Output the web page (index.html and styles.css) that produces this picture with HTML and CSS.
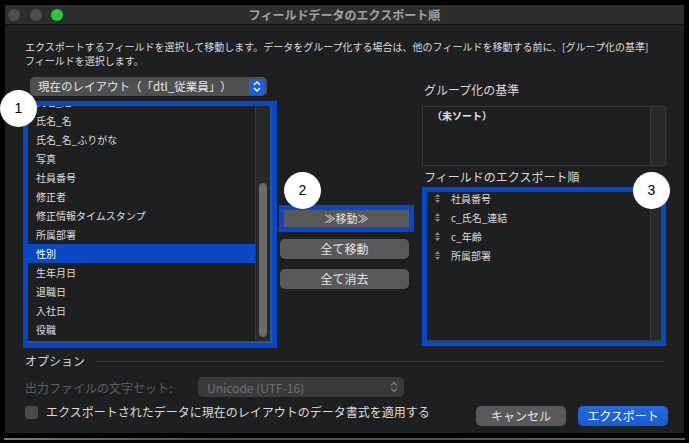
FILE: index.html
```html
<!DOCTYPE html>
<html lang="ja">
<head>
    <meta charset="UTF-8">
    <title>フィールドデータのエクスポート順</title>
    <link rel="stylesheet" href="styles.css">
</head>
<body>
    <div class="window">
        <div class="titlebar">
            <div class="lights">
                <i class="light"></i>
                <i class="light"></i>
                <i class="light green"></i>
            </div>
            <div class="title">フィールドデータのエクスポート順</div>
            <div></div>
        </div>

        <p class="intro">エクスポートするフィールドを選択して移動します。データをグループ化する場合は、他のフィールドを移動する前に、[グループ化の基準]<br>フィールドを選択します。</p>

        <div class="main">
            <!-- 左: フィールド一覧 -->
            <div class="leftcol">
                <div class="popup">
                    <span>現在のレイアウト（「dtl_従業員」）</span>
                    <span class="stepper">
                        <svg width="8" height="11" viewBox="0 0 8 11"><path d="M1 4 L4 1 L7 4 M1 7 L4 10 L7 7" fill="none" stroke="#fff" stroke-width="1.4"/></svg>
                    </span>
                </div>
                <div class="frame leftframe">
                    <div class="list">
                        <ul class="rows">
                            <li class="first">氏名_姓</li>
                            <li>氏名_名</li>
                            <li>氏名_名_ふりがな</li>
                            <li>写真</li>
                            <li>社員番号</li>
                            <li>修正者</li>
                            <li>修正情報タイムスタンプ</li>
                            <li>所属部署</li>
                            <li class="sel">性別</li>
                            <li>生年月日</li>
                            <li>退職日</li>
                            <li>入社日</li>
                            <li>役職</li>
                        </ul>
                        <div class="track"><span class="thumb"></span></div>
                    </div>
                </div>
            </div>

            <!-- 中央: ボタン -->
            <div class="midcol">
                <div class="frame moveframe">
                    <div class="btn movebtn">≫移動≫</div>
                </div>
                <div class="btn wide">全て移動</div>
                <div class="btn wide gap">全て消去</div>
            </div>

            <!-- 右: グループ化 / エクスポート順 -->
            <div class="rightcol">
                <div class="label">グループ化の基準</div>
                <div class="groupbox">
                    <div class="groupitems">
                        <div class="unsorted">（未ソート）</div>
                    </div>
                    <div class="track side"></div>
                </div>
                <div class="label label2">フィールドのエクスポート順</div>
                <div class="frame rightframe">
                    <div class="orderlist">
                        <ul class="orders">
                            <li><svg class="handle" width="7" height="9" viewBox="0 0 7 9"><path d="M3.5 0 L6 3 H1 Z M1 6 H6 L3.5 9 Z" fill="#8c8c8c"/><path d="M1.5 4.5 H5.5" stroke="#6c6c6c" stroke-width="1"/></svg>社員番号</li>
                            <li><svg class="handle" width="7" height="9" viewBox="0 0 7 9"><path d="M3.5 0 L6 3 H1 Z M1 6 H6 L3.5 9 Z" fill="#8c8c8c"/><path d="M1.5 4.5 H5.5" stroke="#6c6c6c" stroke-width="1"/></svg>c_氏名_連結</li>
                            <li><svg class="handle" width="7" height="9" viewBox="0 0 7 9"><path d="M3.5 0 L6 3 H1 Z M1 6 H6 L3.5 9 Z" fill="#8c8c8c"/><path d="M1.5 4.5 H5.5" stroke="#6c6c6c" stroke-width="1"/></svg>c_年齢</li>
                            <li><svg class="handle" width="7" height="9" viewBox="0 0 7 9"><path d="M3.5 0 L6 3 H1 Z M1 6 H6 L3.5 9 Z" fill="#8c8c8c"/><path d="M1.5 4.5 H5.5" stroke="#6c6c6c" stroke-width="1"/></svg>所属部署</li>
                        </ul>
                        <div class="track side"></div>
                    </div>
                </div>
            </div>
        </div>

        <!-- オプション -->
        <div class="options">
            <div class="optrow">
                <span>オプション</span>
                <span class="rule"></span>
            </div>
            <div class="charset">
                <span class="charlabel">出力ファイルの文字セット:</span>
                <div class="popup disabled">
                    <span>Unicode (UTF-16)</span>
                    <svg width="8" height="12" viewBox="0 0 8 12"><path d="M1 4.5 L4 1.5 L7 4.5 M1 7.5 L4 10.5 L7 7.5" fill="none" stroke="#7a7a7a" stroke-width="1.3"/></svg>
                </div>
            </div>
            <div class="bottom">
                <span class="check"></span>
                <span class="checklabel">エクスポートされたデータに現在のレイアウトのデータ書式を適用する</span>
                <div class="actions">
                    <div class="btn action">キャンセル</div>
                    <div class="btn action primary">エクスポート</div>
                </div>
            </div>
        </div>
    </div>
    <div class="shelf"></div>

    <span class="badge b1">1</span>
    <span class="badge b2">2</span>
    <span class="badge b3">3</span>
</body>
</html>
```

FILE: styles.css
```css
*{ margin: 0; padding: 0; box-sizing: border-box; }
body{ background: #000; width: 689px; height: 443px; overflow: hidden; font-family: "Noto Sans CJK JP", "Noto Sans", sans-serif; color: #dedede; text-spacing-trim: space-all; }
ul{ list-style: none; }

.window{ margin: 5px 0 0 5px; width: 679px; height: 428px; background: #1e1f21; overflow: hidden; }

.titlebar{ height: 20px; background: #2e2f2d; border-bottom: 1px solid #111; display: grid; grid-template-columns: 1fr auto 1fr; align-items: center; }
.lights{ display: flex; gap: 9.5px; padding-left: 3px; }
.light{ display: block; width: 12px; height: 12px; border-radius: 50%; background: #4e4e4e; }
.light.green{ background: #2bc840; }
.title{ font-size: 12px; font-weight: bold; line-height: 19px; color: #a2a2a2; }

.intro{ margin-top: 15px; padding-left: 20px; font-size: 10px; line-height: 14px; color: #dcdcdc; white-space: nowrap; }

.main{ display: flex; align-items: flex-start; margin-top: 9px; padding-left: 18px; }

.leftcol{ width: 254px; }
.popup{ display: flex; align-items: center; justify-content: space-between; margin-left: 7px; width: 237px; height: 19px; background: #505052; border-radius: 5px; padding: 0 2px 0 8px; font-size: 11.5px; line-height: 19px; color: #e9e9e9; }
.stepper{ display: flex; align-items: center; justify-content: center; width: 16px; height: 16px; background: #1f5fd8; border-radius: 4px; }

.frame{ border: 5px solid #0a46cb; }
.leftframe{ margin-top: 5px; height: 247px; }
.list{ display: flex; height: 100%; border-right: 2px solid #1c5c8e; border-bottom: 2px solid #1c5c8e; overflow: hidden; }
.rows{ flex: 1; font-size: 10px; line-height: 19px; color: #dddddd; }
.rows li{ height: 19px; padding-left: 8px; }
.rows .first{ margin-top: -14px; }
.rows .sel{ background: #0b48c4; color: #fff; }
.track{ width: 15px; background: #28292a; border-left: 1px solid #3a3a3b; padding: 77px 0 0 3px; }
.thumb{ display: block; width: 8px; height: 154px; border-radius: 4px; background: #6a6a6b; }

.midcol{ width: 135px; margin-left: 2px; }
.moveframe{ margin-top: 128px; height: 27px; }
.btn{ background: #59595b; color: #e4e4e4; font-size: 12px; text-align: center; border-radius: 5px; }
.movebtn{ height: 17px; line-height: 17px; border-radius: 0; font-size: 11px; }
.wide{ margin: 7px 0 0 1px; width: 129px; height: 20px; line-height: 20px; }
.wide.gap{ margin-top: 10px; }

.rightcol{ width: 244px; margin-left: 8px; }
.label{ margin-top: 5px; padding-left: 2px; font-size: 12px; line-height: 16px; color: #d9d9d9; }
.groupbox{ display: flex; margin-top: 8px; height: 60px; border: 1px solid #38383a; }
.groupitems{ flex: 1; }
.unsorted{ padding-left: 9px; font-size: 10px; font-weight: bold; line-height: 17px; color: #e2e2e2; }
.side{ width: 15px; padding: 0; }
.label2{ margin-top: 3px; }
.rightframe{ margin-top: 2px; height: 159px; }
.orderlist{ display: flex; height: 100%; border-bottom: 1px solid #3a3a3b; overflow: hidden; }
.orders{ flex: 1; margin-top: -3px; font-size: 10px; line-height: 19px; color: #dddddd; }
.orders li{ display: flex; align-items: center; height: 19px; padding-left: 7px; }
.handle{ margin-right: 10px; }
.orderlist .side{ width: 11px; }

.options{ padding: 0 19px 0 20px; font-size: 12px; }
.optrow{ display: flex; align-items: center; margin-top: 6px; line-height: 14px; color: #d6d6d6; }
.rule{ flex: 1; height: 1px; background: #38383a; margin-left: 12px; }
.charset{ display: flex; align-items: center; margin-top: 9px; height: 20px; }
.charlabel{ width: 173px; color: #5e5e5e; }
.popup.disabled{ margin-left: 0; width: 206px; height: 20px; background: #3a3a3c; color: #6f6f6f; font-size: 12px; padding: 0 6px 0 9px; }
.bottom{ display: flex; align-items: flex-start; margin-top: 8px; }
.check{ width: 13px; height: 13px; margin-top: 1px; border-radius: 3px; background: #4b4b4d; }
.checklabel{ margin-left: 8px; line-height: 14px; color: #dcdcdc; }
.actions{ display: flex; gap: 12px; margin-left: auto; margin-right: -3px; margin-top: 1px; }
.action{ width: 90px; height: 20px; line-height: 20px; }
.primary{ background: linear-gradient(#2569dc, #1a5bd2); color: #fff; }

.shelf{ margin: 5px 4px 0; height: 2px; background: linear-gradient(to right, #7c7c7c, #4f4f4f 30%, #5a5a5a); }

.badge{ position: absolute; width: 37px; height: 37px; border-radius: 50%; background: #fff; color: #000; font-family: "Liberation Sans", Arial, sans-serif; font-size: 14px; line-height: 37px; text-align: center; }
.b1{ left: 0; top: 90px; }
.b2{ left: 284px; top: 172px; }
.b3{ left: 633px; top: 172px; }
```
